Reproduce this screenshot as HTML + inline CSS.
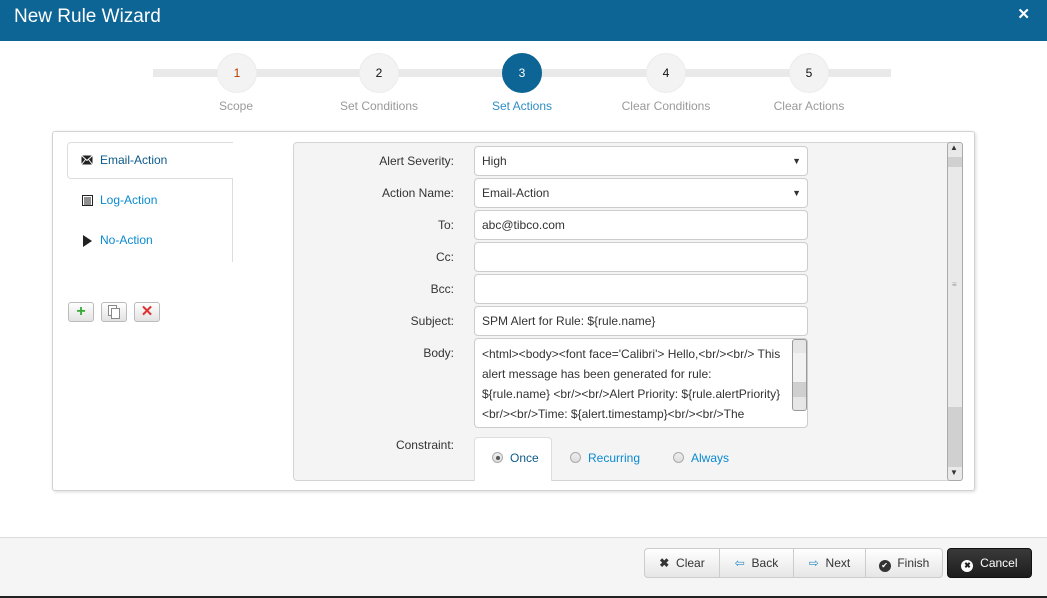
<!DOCTYPE html>
<html><head><meta charset="utf-8"><style>
*{box-sizing:border-box;margin:0;padding:0}
body{width:1047px;height:598px;position:relative;background:#fff;font-family:"Liberation Sans",Arial,sans-serif;font-size:12px;color:#333;overflow:hidden}
.a{position:absolute}
.hdr{left:0;top:0;width:1047px;height:41px;background:#0c6595;color:#fff}
.hdr .t{left:14px;top:6px;font-size:19px}
.hdr .x{right:17px;top:5px;font-size:15px;font-weight:bold}
.line{left:153px;top:69px;width:738px;height:8px;background:#e9e9e9}
.c{width:40px;height:40px;border-radius:50%;background:#f3f3f3;border:1px solid #ececec;text-align:center;line-height:38px;font-size:12px;color:#111;top:53px}
.c.on{background:#0c6595;color:#fff;border-color:#0c6595}
.lb{top:99px;width:160px;text-align:center;font-size:12px;color:#9a9a9a}
.outer{left:52px;top:131px;width:923px;height:360px;border:1px solid #d2d2d2;border-radius:3px;box-shadow:1px 1px 3px rgba(0,0,0,.15)}
.tabs{left:67px;top:142px;width:166px;height:120px;border-right:1px solid #ddd}
.tab1{left:67px;top:142px;width:166px;height:37px;border:1px solid #ddd;border-right:none;border-radius:4px 0 0 4px;background:#fff}
.tl{font-size:12px;color:#0a8ad0}
.form{left:293px;top:142px;width:670px;height:339px;background:#f4f4f4;border:1px solid #d4d4d4;border-radius:4px}
.fl{width:160px;text-align:right;font-size:12px;color:#333;left:294px}
.in{left:474px;width:334px;height:30px;background:#fff;border:1px solid #ccc;border-radius:4px;padding:0 0 0 7px;line-height:28px;font-size:12px;color:#333}
.arr{position:absolute;right:6px;top:0;font-size:9px}
.btn{height:30px;top:548px;border:1px solid #ccc;background:linear-gradient(#fff,#e6e6e6);line-height:28px;font-size:12px;color:#333;text-align:center}
.sb{width:26px;height:20px;top:302px;border:1px solid #bbb;border-radius:3px;background:linear-gradient(#fff,#e2e2e2);text-align:center;line-height:18px}
.rad{display:inline-block;width:11px;height:11px;border-radius:50%;border:1px solid #aaa;background:linear-gradient(#eee,#ddd);vertical-align:-1px;margin-right:7px;position:relative}
</style></head><body>
<div class="a hdr"><div class="a t">New Rule Wizard</div><div class="a x">✕</div></div>

<div class="a line"></div>
<div class="a c" style="left:217px;color:#b33c00">1</div>
<div class="a c" style="left:359px">2</div>
<div class="a c on" style="left:502px">3</div>
<div class="a c" style="left:646px">4</div>
<div class="a c" style="left:789px">5</div>
<div class="a lb" style="left:156px">Scope</div>
<div class="a lb" style="left:299px">Set Conditions</div>
<div class="a lb" style="left:442px;color:#2f8dc5">Set Actions</div>
<div class="a lb" style="left:586px">Clear Conditions</div>
<div class="a lb" style="left:729px">Clear Actions</div>

<div class="a outer"></div>
<div class="a tabs"></div>
<div class="a tab1"></div>
<svg class="a" style="left:81px;top:155px" width="12" height="10"><rect x="0.5" y="0.5" width="11" height="9" fill="#222"/><path d="M0.5 0.5L6 5.5L11.5 0.5M0.5 9.5L4.5 4.5M11.5 9.5L7.5 4.5" stroke="#fff" stroke-width="1" fill="none"/></svg>
<div class="a tl" style="left:100px;top:153px;color:#0c5a8a">Email-Action</div>
<svg class="a" style="left:82px;top:195px" width="11" height="11"><rect x="0.5" y="0.5" width="10" height="10" fill="#fff" stroke="#222"/><path d="M2 3h7M2 5h7M2 7h7M2 9h7" stroke="#222"/></svg>
<div class="a tl" style="left:100px;top:193px">Log-Action</div>
<svg class="a" style="left:83px;top:235px" width="10" height="12"><path d="M0 0L9 6L0 12Z" fill="#222"/></svg>
<div class="a tl" style="left:100px;top:233px">No-Action</div>

<div class="a sb" style="left:68px;color:#3a3;font-weight:bold;font-size:16px">+</div>
<div class="a sb" style="left:101px"><svg width="12" height="14" style="margin-top:2px"><rect x="0.5" y="0.5" width="8" height="10" fill="#fff" stroke="#888"/><rect x="3.5" y="3.5" width="8" height="10" fill="#fff" stroke="#888"/></svg></div>
<div class="a sb" style="left:134px;color:#d33;font-size:15px;font-weight:bold">✕</div>

<div class="a form"></div>
<div class="a fl" style="top:154px">Alert Severity:</div>
<div class="a fl" style="top:186px">Action Name:</div>
<div class="a fl" style="top:218px">To:</div>
<div class="a fl" style="top:250px">Cc:</div>
<div class="a fl" style="top:282px">Bcc:</div>
<div class="a fl" style="top:314px">Subject:</div>
<div class="a fl" style="top:346px">Body:</div>
<div class="a fl" style="top:438px">Constraint:</div>

<div class="a in" style="top:146px">High<span class="arr">▼</span></div>
<div class="a in" style="top:178px">Email-Action<span class="arr">▼</span></div>
<div class="a in" style="top:210px">abc@tibco.com</div>
<div class="a in" style="top:242px"></div>
<div class="a in" style="top:274px"></div>
<div class="a in" style="top:306px">SPM Alert for Rule: ${rule.name}</div>
<div class="a in" style="top:338px;height:90px;line-height:20px;padding-top:5px;font-size:12px;overflow:hidden;padding-right:20px">&lt;html&gt;&lt;body&gt;&lt;font face='Calibri'&gt; Hello,&lt;br/&gt;&lt;br/&gt; This alert message has been generated for rule:<br>${rule.name} &lt;br/&gt;&lt;br/&gt;Alert Priority: ${rule.alertPriority}<br>&lt;br/&gt;&lt;br/&gt;Time: ${alert.timestamp}&lt;br/&gt;&lt;br/&gt;The</div>
<div class="a" style="left:792px;top:339px;width:15px;height:72px;background:#e6e6e6;border:1px solid #999;border-radius:3px"></div>
<div class="a" style="left:793px;top:353px;width:13px;height:30px;background:#f2f2f2;border-bottom:1px solid #ccc"></div>
<div class="a" style="left:793px;top:383px;width:13px;height:14px;background:#cfcfcf"></div>

<div class="a" style="left:474px;top:437px;width:78px;height:44px;background:#fff;border:1px solid #ddd;border-bottom:none;border-radius:4px 4px 0 0"></div>
<div class="a" style="left:492px;top:451px;font-size:12px;color:#0c5a8a"><span class="rad"><span style="position:absolute;left:3px;top:3px;width:4px;height:4px;border-radius:50%;background:#555"></span></span>Once</div>
<div class="a" style="left:570px;top:451px;font-size:12px;color:#0a8ad0"><span class="rad"></span>Recurring</div>
<div class="a" style="left:673px;top:451px;font-size:12px;color:#0a8ad0"><span class="rad"></span>Always</div>

<div class="a" style="left:947px;top:142px;width:16px;height:339px;background:#e9e9e9;border:1px solid #aaa;border-radius:3px"></div>
<div class="a" style="left:948px;top:157px;width:14px;height:10px;background:#d0d0d0"></div>
<div class="a" style="left:948px;top:407px;width:14px;height:60px;background:#d0d0d0"></div>
<div class="a" style="left:950px;top:143px;font-size:8px">▲</div>
<div class="a" style="left:950px;top:468px;font-size:8px">▼</div>
<div class="a" style="left:952px;top:280px;font-size:8px;color:#999">≡</div>

<div class="a" style="left:0;top:537px;width:1047px;height:60px;background:#f5f5f5;border-top:1px solid #ddd"></div>
<div class="a" style="left:0;top:596px;width:1047px;height:2px;background:#222"></div>
<div class="a btn" style="left:644px;width:76px;border-radius:4px 0 0 4px"><b>✖</b>&nbsp; Clear</div>
<div class="a btn" style="left:719px;width:75px"><span style="color:#2a8ac0">⇦</span>&nbsp; Back</div>
<div class="a btn" style="left:793px;width:73px"><span style="color:#2a8ac0">⇨</span>&nbsp; Next</div>
<div class="a btn" style="left:865px;width:78px;border-radius:0 4px 4px 0"><span style="display:inline-block;width:12px;height:12px;border-radius:50%;background:#333;color:#fff;font-size:8px;line-height:12px;vertical-align:-1px">✔</span>&nbsp; Finish</div>
<div class="a btn" style="left:947px;width:85px;background:linear-gradient(#3a3a3a,#1e1e1e);color:#fff;border-color:#111;border-radius:4px"><span style="display:inline-block;width:12px;height:12px;border-radius:50%;background:#fff;color:#222;font-size:8px;line-height:12px;vertical-align:-1px;font-weight:bold">✖</span>&nbsp; Cancel</div>
</body></html>
